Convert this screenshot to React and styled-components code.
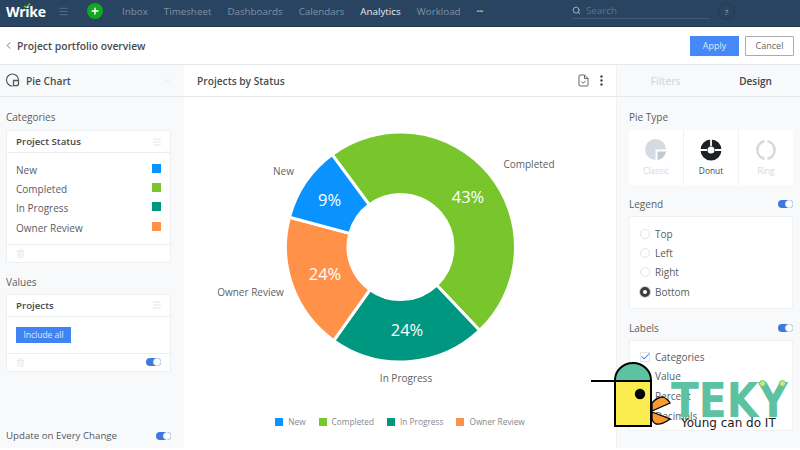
import React from "react";
import styled, { createGlobalStyle } from "styled-components";
import { Search, ChevronLeft, ChevronDown, Menu, Plus, Trash2, Check } from "lucide-react";

const slices = [
  { name: "Completed", color: "#78c52c", from: -36.5, to: 136.5 },
  { name: "In Progress", color: "#009781", from: 136.5, to: 215.5 },
  { name: "Owner Review", color: "#ff9149", from: 215.5, to: 285 },
  { name: "New", color: "#0a93ff", from: 285, to: 323.5 },
];

const legendOrder = [slices[3], slices[0], slices[1], slices[2]];
const navItems = ["Inbox", "Timesheet", "Dashboards", "Calendars", "Analytics", "Workload"];

function point(cx, cy, r, deg) {
  const rad = (deg * Math.PI) / 180;
  return `${(cx + r * Math.sin(rad)).toFixed(2)} ${(cy - r * Math.cos(rad)).toFixed(2)}`;
}

function arc(cx, cy, outer, inner, from, to) {
  const large = to - from > 180 ? 1 : 0;
  return `M${point(cx, cy, outer, from)} A${outer} ${outer} 0 ${large} 1 ${point(cx, cy, outer, to)} L${point(cx, cy, inner, to)} A${inner} ${inner} 0 ${large} 0 ${point(cx, cy, inner, from)} Z`;
}

function App() {
  return (
    <Page>
      <GlobalStyle />
      <TopBar>
        <Logo>
          Wrike
          <LogoTick viewBox="0 0 8 5">
            <path d="M1 3l2 1.5L7 .5" fill="none" stroke="#6fc52c" strokeWidth="1.2" />
          </LogoTick>
        </Logo>
        <MenuIcon size={11} strokeWidth={1.5} />
        <AddButton>
          <Plus size={10} strokeWidth={3.4} />
        </AddButton>
        <Nav>
          {navItems.map((item) => (
            <NavItem key={item} $active={item === "Analytics"}>
              {item}
            </NavItem>
          ))}
          <NavDots>•••</NavDots>
        </Nav>
        <SearchBox>
          <Search size={9} strokeWidth={2.4} />
          <span>Search</span>
        </SearchBox>
        <Help>?</Help>
      </TopBar>

      <SubBar>
        <ChevronLeft size={11} strokeWidth={1.8} color="#555" />
        <PageTitle>Project portfolio overview</PageTitle>
        <ApplyButton>Apply</ApplyButton>
        <CancelButton>Cancel</CancelButton>
      </SubBar>

      <Main>
        <LeftPanel>
          <PanelHead>
            <svg width="15" height="15" viewBox="0 0 15 15" fill="none" stroke="#555" strokeWidth="1.1">
              <path d="M6.500 13a6 6 0 1 1 6-6" />
              <path d="M7.500 7.500h5v3a2.200 2.200 0 0 1-2.200 2.200H7.500z" strokeWidth="1.300" />
            </svg>
            <HeadTitle>Pie Chart</HeadTitle>
            <FaintChevron size={11} />
          </PanelHead>
          <LeftBody>
            <SectionLabel>Categories</SectionLabel>
            <Card>
              <CardHead>
                <CardTitle>Project Status</CardTitle>
                <Menu size={10} color="#dcdfe3" />
              </CardHead>
              <CategoryList>
                {legendOrder.map((s) => (
                  <CategoryRow key={s.name}>
                    {s.name}
                    <Swatch $color={s.color} />
                  </CategoryRow>
                ))}
              </CategoryList>
              <CardFoot>
                <Trash2 size={9} color="#dfe2e6" />
              </CardFoot>
            </Card>
            <SectionLabel $top={12}>Values</SectionLabel>
            <Card>
              <CardHead>
                <CardTitle>Projects</CardTitle>
                <Menu size={10} color="#dcdfe3" />
              </CardHead>
              <ValueBody>
                <IncludeButton>Include all</IncludeButton>
              </ValueBody>
              <CardFoot>
                <Trash2 size={9} color="#dfe2e6" />
                <Toggle />
              </CardFoot>
            </Card>
            <UpdateRow>
              Update on Every Change
              <Toggle />
            </UpdateRow>
          </LeftBody>
        </LeftPanel>

        <Center>
          <ChartHead>
            <HeadTitle>Projects by Status</HeadTitle>
            <ChartTools>
              <svg width="11" height="13" viewBox="0 0 11 13" fill="none" stroke="#666" strokeWidth="1">
                <path d="M1 2a1 1 0 0 1 1-1h4.500L10 4.500V11a1 1 0 0 1-1 1H2a1 1 0 0 1-1-1z" />
                <path d="M6.500 1v3.500H10M3.500 7.500l1.700 1.500 2.300-2" />
              </svg>
              <svg width="3" height="11" viewBox="0 0 3 11" fill="#444">
                <circle cx="1.500" cy="1.500" r="1.200" />
                <circle cx="1.500" cy="5.500" r="1.200" />
                <circle cx="1.500" cy="9.500" r="1.200" />
              </svg>
            </ChartTools>
          </ChartHead>
          <ChartSvg viewBox="184 97 432 305" width="432" height="305">
            {slices.map((s) => (
              <path key={s.name} d={arc(400.5, 247, 115, 52.5, s.from, s.to)} fill={s.color} stroke="#fff" strokeWidth="3" />
            ))}
            <Percent x="468" y="203">43%</Percent>
            <Percent x="329.500" y="206">9%</Percent>
            <Percent x="325" y="280">24%</Percent>
            <Percent x="407" y="336">24%</Percent>
            <SliceLabel x="283.500" y="175">New</SliceLabel>
            <SliceLabel x="529" y="168">Completed</SliceLabel>
            <SliceLabel x="250.500" y="296">Owner Review</SliceLabel>
            <SliceLabel x="406" y="382">In Progress</SliceLabel>
          </ChartSvg>
          <Legend>
            {legendOrder.map((s) => (
              <LegendItem key={s.name}>
                <LegendSwatch $color={s.color} />
                {s.name}
              </LegendItem>
            ))}
          </Legend>
        </Center>

        <RightPanel>
          <Tabs>
            <Tab>Filters</Tab>
            <Tab $active>Design</Tab>
          </Tabs>
          <RightBody>
            <SectionLabel>Pie Type</SectionLabel>
            <TypeGrid>
              <TypeCell>
                <svg width="22" height="22" viewBox="0 0 22 22" fill="#d5dbe2">
                  <path d="M21 10.500A10.500 10.500 0 1 0 10.500 21V10.500z" />
                  <path d="M12.500 12.500h8.500A10 10 0 0 1 12.500 21z" fill="#c3c9d0" />
                </svg>
                <TypeName>Classic</TypeName>
              </TypeCell>
              <TypeCell $active>
                <svg width="22" height="22" viewBox="0 0 22 22">
                  <circle cx="11" cy="11" r="7" fill="none" stroke="#1f2225" strokeWidth="7" />
                  <path d="M11 0v7M0 11h7M15 11h7" stroke="#fff" strokeWidth="1.800" />
                </svg>
                <TypeName $active>Donut</TypeName>
              </TypeCell>
              <TypeCell>
                <svg width="22" height="22" viewBox="0 0 22 22" fill="none" stroke="#d5d9dd" strokeWidth="2.600">
                  <path d="M9.500 2.200A9 9 0 0 0 9.500 19.800" />
                  <path d="M12.500 2.200A9 9 0 0 1 12.500 19.800" />
                </svg>
                <TypeName>Ring</TypeName>
              </TypeCell>
            </TypeGrid>
            <LabelRow>
              Legend
              <Toggle />
            </LabelRow>
            <OptionCard>
              <OptionRow><Radio />Top</OptionRow>
              <OptionRow><Radio />Left</OptionRow>
              <OptionRow><Radio />Right</OptionRow>
              <OptionRow><Radio $checked />Bottom</OptionRow>
            </OptionCard>
            <LabelRow>
              Labels
              <Toggle />
            </LabelRow>
            <OptionCard $tall>
              <OptionRow>
                <CheckBox><Check size={11} strokeWidth={2.200} color="#4a80e8" /></CheckBox>
                Categories
              </OptionRow>
              <OptionRow><CheckBox />Value</OptionRow>
              <OptionRow><CheckBox />Percent</OptionRow>
              <OptionRow><CheckBox />Decimals</OptionRow>
            </OptionCard>
          </RightBody>
        </RightPanel>
      </Main>

      <Watermark>
        <svg width="84" height="68" viewBox="0 0 84 68">
          <path d="M25 19v-1a18 17 0 0 1 36 0v1z" fill="#5cc2a2" stroke="#000" strokeWidth="2" />
          <rect x="25" y="19" width="36" height="45" fill="#fbec50" stroke="#000" strokeWidth="2" />
          <path d="M1 19h24" stroke="#000" strokeWidth="2" />
          <circle cx="50" cy="32" r="5.200" fill="#000" />
          <path d="M62 41Q67 35 73 35Q78 37 80 41L62 49z" fill="#f79a32" stroke="#000" strokeWidth="1.300" />
          <path d="M62 50L80 57Q72 63 66 62Q62 60 62 56z" fill="#f79a32" stroke="#000" strokeWidth="1.300" />
        </svg>
        <Brand>
          <BrandDots>
            <BrandDot />
            <BrandDot />
          </BrandDots>
          <BrandName>TEKY</BrandName>
          <BrandTag>Young can do IT</BrandTag>
        </Brand>
      </Watermark>
    </Page>
  );
}

export default App;

const GlobalStyle = createGlobalStyle`
  *, *::before, *::after {
    box-sizing: border-box;
  }
  html, body {
    margin: 0;
    background: #fff;
  }
  body {
    font-family: "Open Sans", "Liberation Sans", sans-serif;
    color: #555;
  }
`;

const Page = styled.div`
  position: relative;
  width: 800px;
  height: 450px;
  overflow: hidden;
  background: #fff;
`;

const TopBar = styled.header`
  display: flex;
  align-items: center;
  height: 27px;
  padding: 0 0 4px 6px;
  background: #294460;
  border-bottom: 1px solid #22384f;
  color: #7e92a6;
`;

const Logo = styled.div`
  position: relative;
  width: 52px;
  font-family: "Open Sans", sans-serif;
  font-size: 14px;
  font-weight: 700;
  letter-spacing: -0.3px;
  color: #fff;
`;

const LogoTick = styled.svg`
  position: absolute;
  left: 17px;
  top: 1px;
  width: 8px;
  height: 5px;
`;

const MenuIcon = styled(Menu)`
  color: #6c8197;
`;

const AddButton = styled.div`
  display: flex;
  align-items: center;
  justify-content: center;
  width: 16px;
  height: 16px;
  margin-left: 18px;
  border-radius: 50%;
  background: #11a71f;
  color: #fff;
`;

const Nav = styled.nav`
  display: flex;
  align-items: center;
  gap: 16px;
  width: 363px;
  margin-left: 19px;
  font-size: 9.800px;
`;

const NavItem = styled.span`
  color: ${(p) => (p.$active ? "#e8edf2" : "#7e92a6")};
`;

const NavDots = styled.span`
  font-size: 7px;
  letter-spacing: -0.500px;
  color: #b6c2ce;
`;

const SearchBox = styled.div`
  display: flex;
  align-items: center;
  gap: 5px;
  width: 138px;
  height: 15px;
  margin-left: 87px;
  border-bottom: 1px solid #3f5a75;
  font-size: 9.800px;
  color: #5d7389;

  svg {
    color: #a9b6c3;
  }
`;

const Help = styled.div`
  display: flex;
  align-items: center;
  justify-content: center;
  width: 17px;
  height: 17px;
  margin-left: 8px;
  border: 1px solid #223a52;
  border-radius: 50%;
  font-size: 8px;
  color: #a9b6c3;
`;

const SubBar = styled.div`
  display: flex;
  align-items: center;
  height: 38px;
  padding: 0 6px 0 3px;
  border-bottom: 1px solid #e6e8eb;
`;

const PageTitle = styled.h1`
  flex: 1;
  margin: 0 0 0 3px;
  font-size: 10.300px;
  font-weight: 600;
  color: #474a4e;
`;

const ApplyButton = styled.div`
  display: flex;
  align-items: center;
  justify-content: center;
  width: 49px;
  height: 20px;
  background: #4589f6;
  font-size: 9px;
  color: #d9e8ff;
`;

const CancelButton = styled(ApplyButton)`
  margin-left: 6px;
  background: #fff;
  border: 1px solid #a9abad;
  border-radius: 1px;
  color: #666;
`;

const Main = styled.main`
  display: flex;
  height: 383px;
`;

const LeftPanel = styled.aside`
  display: flex;
  flex-direction: column;
  width: 184px;
  background: #f8f9fb;
`;

const PanelHead = styled.div`
  display: flex;
  align-items: center;
  gap: 5px;
  height: 32px;
  padding: 0 11px 0 6px;
  border-bottom: 1px solid #e6e8eb;
`;

const HeadTitle = styled.h2`
  flex: 1;
  margin: 0;
  font-size: 10.200px;
  font-weight: 600;
  color: #4a4d51;
`;

const FaintChevron = styled(ChevronDown)`
  color: #e0e3e6;
`;

const LeftBody = styled.div`
  display: flex;
  flex-direction: column;
  flex: 1;
  padding: 13px 13px 6px 6px;
`;

const SectionLabel = styled.div`
  margin-top: ${(p) => p.$top || 0}px;
  margin-bottom: ${(p) => (p.$top ? 5 : 6)}px;
  font-size: 10px;
  line-height: 14px;
  color: #5a5d61;
`;

const Card = styled.section`
  background: #fff;
  border: 1px solid #eff0f2;
`;

const CardHead = styled.div`
  display: flex;
  align-items: center;
  justify-content: space-between;
  height: 22px;
  padding: 0 8px 0 9px;
  border-bottom: 1px solid #eceef0;
`;

const CardTitle = styled.div`
  font-size: 9.700px;
  font-weight: 600;
  color: #44474b;
`;

const CategoryList = styled.div`
  display: flex;
  flex-direction: column;
  padding: 7px 9px 6px;
  border-bottom: 1px solid #eceef0;
`;

const CategoryRow = styled.div`
  display: flex;
  align-items: center;
  justify-content: space-between;
  height: 19.400px;
  font-size: 10px;
  color: #5a5d61;
`;

const Swatch = styled.span`
  width: 9px;
  height: 9px;
  margin-top: -3px;
  background: ${(p) => p.$color};
`;

const CardFoot = styled.div`
  display: flex;
  align-items: center;
  justify-content: space-between;
  height: 17px;
  padding: 0 9px;
`;

const ValueBody = styled.div`
  display: flex;
  align-items: flex-start;
  height: 37px;
  padding: 10px 9px 0;
  border-bottom: 1px solid #eceef0;
`;

const IncludeButton = styled.div`
  display: flex;
  align-items: center;
  justify-content: center;
  width: 55px;
  height: 16px;
  background: #3f84f0;
  font-size: 8.500px;
  color: #dce9ff;
`;

const Toggle = styled.span`
  position: relative;
  display: block;
  width: 15px;
  height: 8px;
  border-radius: 4px;
  background: #3f78e0;

  &::after {
    content: "";
    position: absolute;
    right: 0;
    top: 0;
    width: 8px;
    height: 8px;
    border-radius: 50%;
    border: 1px solid #e6ebf3;
    background: #fff;
  }
`;

const UpdateRow = styled.div`
  display: flex;
  align-items: center;
  justify-content: space-between;
  margin-top: auto;
  font-size: 9.700px;
  color: #55585c;
`;

const Center = styled.section`
  display: flex;
  flex-direction: column;
  flex: 1;
`;

const ChartHead = styled.div`
  display: flex;
  align-items: center;
  height: 32px;
  padding: 0 13px;
  border-bottom: 1px solid #e6e8eb;
`;

const ChartTools = styled.div`
  display: flex;
  align-items: center;
  gap: 11px;
`;

const ChartSvg = styled.svg`
  display: block;
  font-family: "Open Sans", sans-serif;
`;

const Percent = styled.text`
  font-size: 16.500px;
  font-weight: 500;
  fill: #fff;
  text-anchor: middle;
`;

const SliceLabel = styled.text`
  font-size: 10px;
  fill: #5c5f63;
  text-anchor: middle;
`;

const Legend = styled.div`
  display: flex;
  justify-content: center;
  align-items: center;
  gap: 13px;
  margin-top: 14px;
  font-size: 8.300px;
  color: #85888c;
`;

const LegendItem = styled.div`
  display: flex;
  align-items: center;
  gap: 5px;
`;

const LegendSwatch = styled.span`
  width: 8px;
  height: 8px;
  background: ${(p) => p.$color};
`;

const RightPanel = styled.aside`
  display: flex;
  flex-direction: column;
  width: 184px;
  background: #f8f9fb;
  border-left: 1px solid #eff0f2;
`;

const Tabs = styled.div`
  display: grid;
  grid-template-columns: 97px 1fr;
  height: 32px;
  border-bottom: 1px solid #e6e8eb;
`;

const Tab = styled.div`
  display: flex;
  align-items: center;
  justify-content: center;
  padding-right: ${(p) => (p.$active ? 3 : 0)}px;
  font-size: 10px;
  font-weight: 600;
  color: ${(p) => (p.$active ? "#3f4246" : "#d6dadf")};
`;

const RightBody = styled.div`
  display: flex;
  flex-direction: column;
  padding: 13px 7px 0 12px;
`;

const TypeGrid = styled.div`
  display: grid;
  grid-template-columns: repeat(3, 1fr);
  gap: 1px;
  height: 55px;
  background: #f1f2f4;
`;

const TypeCell = styled.div`
  display: flex;
  flex-direction: column;
  align-items: center;
  gap: 4px;
  padding-top: 9px;
  background: #fff;
`;

const TypeName = styled.span`
  font-size: 8.400px;
  color: ${(p) => (p.$active ? "#44474b" : "#d4d7db")};
`;

const LabelRow = styled.div`
  display: flex;
  align-items: center;
  justify-content: space-between;
  margin-top: 12px;
  margin-bottom: 5px;
  font-size: 10px;
  line-height: 14px;
  color: #5a5d61;
`;

const OptionCard = styled.div`
  display: flex;
  flex-direction: column;
  gap: ${(p) => (p.$tall ? 0.4 : 0)}px;
  height: ${(p) => (p.$tall ? 91 : 93)}px;
  padding: ${(p) => (p.$tall ? 6 : 7)}px 10px 0;
  background: #fff;
  border: 1px solid #f0f1f3;
`;

const OptionRow = styled.div`
  display: flex;
  align-items: center;
  gap: 5px;
  height: 19.400px;
  font-size: 10px;
  color: #5a5d61;
`;

const Radio = styled.span`
  width: 10px;
  height: 10px;
  border-radius: 50%;
  border: ${(p) => (p.$checked ? "3px solid #3a3d40" : "1px solid #e2e4e7")};
  box-shadow: ${(p) => (p.$checked ? "0 0 0 1px #d0d2d5" : "none")};
  background: #fff;
`;

const CheckBox = styled.span`
  display: flex;
  align-items: center;
  justify-content: center;
  width: 10px;
  height: 10px;
  border: 1px solid #e2e4e7;
  background: #fff;

  svg {
    flex-shrink: 0;
  }
`;

const Watermark = styled.div`
  position: absolute;
  left: 590px;
  top: 362px;
  display: flex;
  align-items: flex-start;
`;

const Brand = styled.div`
  position: relative;
  width: 120px;
  height: 68px;
  margin-left: -3px;
`;

const BrandDots = styled.div`
  position: absolute;
  z-index: 1;
  left: 88px;
  top: 18px;
  display: flex;
  gap: 13px;
`;

const BrandDot = styled.span`
  width: 7px;
  height: 7px;
  border-radius: 50%;
  border: 1px solid #5cc2a2;
  background: #d7e85a;
`;

const BrandName = styled.div`
  position: absolute;
  left: 0;
  top: 13px;
  width: 160px;
  transform-origin: left top;
  transform: scaleX(0.850);
  font-family: "DejaVu Sans", sans-serif;
  font-size: 48px;
  font-weight: 700;
  line-height: 50px;
  color: #5cc2a2;
`;

const BrandTag = styled.div`
  position: absolute;
  left: 10px;
  top: 54px;
  font-family: "DejaVu Sans", sans-serif;
  font-size: 12px;
  line-height: 14px;
  white-space: nowrap;
  color: #1a1a1a;
`;
